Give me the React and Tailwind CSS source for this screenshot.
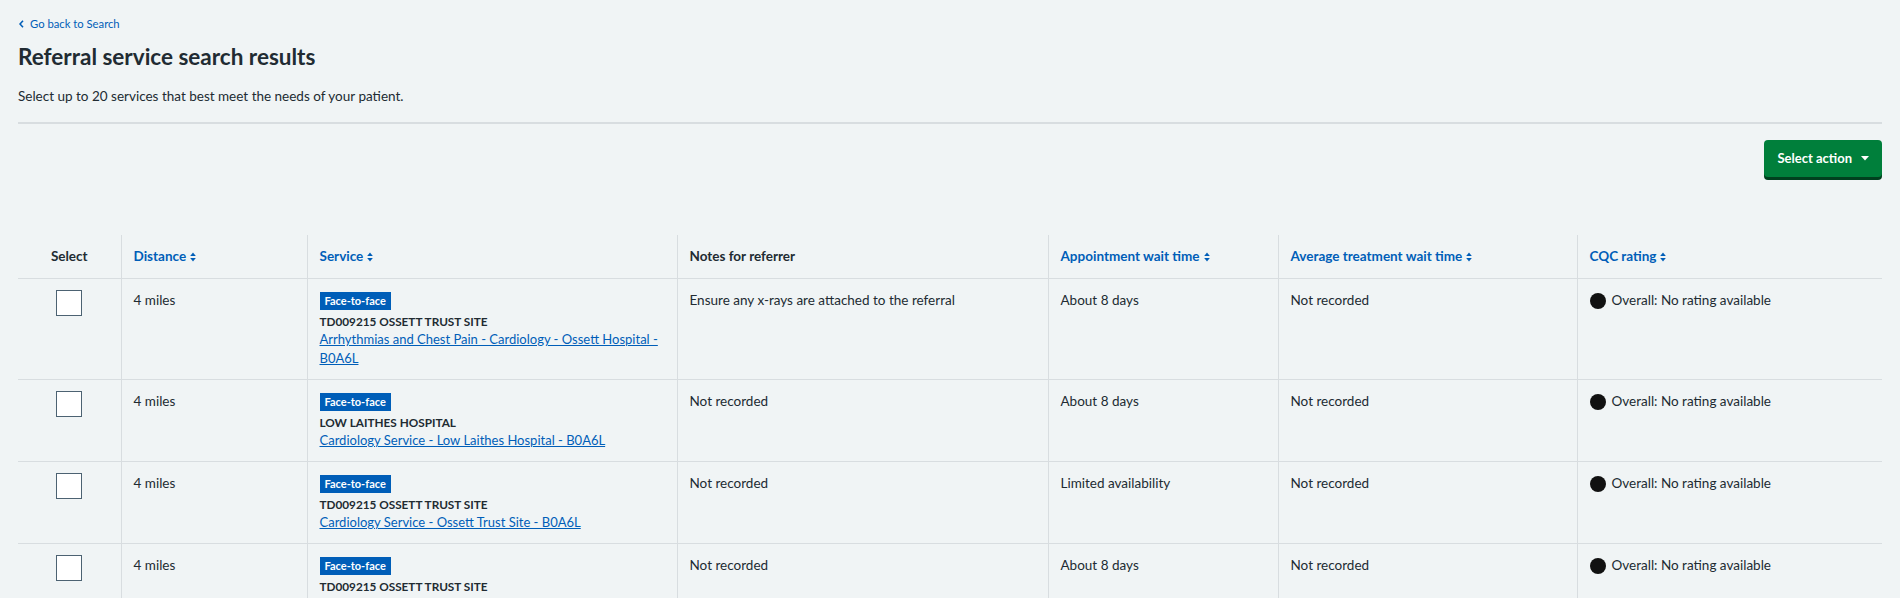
const rows = [
  {
    name: 'TD009215 OSSETT TRUST SITE',
    service: 'Arrhythmias and Chest Pain - Cardiology - Ossett Hospital - B0A6L',
    notes: 'Ensure any x-rays are attached to the referral',
    appointment: 'About 8 days',
  },
  {
    name: 'LOW LAITHES HOSPITAL',
    service: 'Cardiology Service - Low Laithes Hospital - B0A6L',
    notes: 'Not recorded',
    appointment: 'About 8 days',
  },
  {
    name: 'TD009215 OSSETT TRUST SITE',
    service: 'Cardiology Service - Ossett Trust Site - B0A6L',
    notes: 'Not recorded',
    appointment: 'Limited availability',
  },
  {
    name: 'TD009215 OSSETT TRUST SITE',
    service: 'Cardiology Service - Ossett Trust Site - B0A6L',
    notes: 'Not recorded',
    appointment: 'About 8 days',
  },
];

const SortIcon = () => (
  <svg width="6" height="10" viewBox="0 0 6 10" className="ml-[4px] inline-block">
    <path d="M3 0.5 L5.8 4 H0.2 Z" fill="#005eb8" />
    <path d="M3 9.5 L5.8 6 H0.2 Z" fill="#005eb8" />
  </svg>
);

const SortHeader = ({ label, className = '' }) => (
  <th className={`border-l border-[#d8dde0] px-3 py-[12px] text-left align-middle font-bold text-[#005eb8] ${className}`}>
    <span className="inline-flex items-center">
      {label}
      <SortIcon />
    </span>
  </th>
);

const App = () => {
  return (
    <div
      className="min-h-screen bg-[#f0f4f5] px-[18px] pt-[16px] text-[#212b32]"
      style={{ fontFamily: 'Lato, "Liberation Sans", Arial, sans-serif' }}
    >
      {/* Back link */}
      <a href="#" className="flex items-center gap-[6px] pl-[1px] text-[11.25px] leading-[16px] text-[#005eb8]">
        <svg width="5" height="8" viewBox="0 0 5 8">
          <path d="M4 0.8 L1 4 L4 7.2" fill="none" stroke="#005eb8" strokeWidth="1.6" />
        </svg>
        Go back to Search
      </a>

      <h1 className="mt-[10px] text-[22.5px] font-bold leading-[30px]">
        Referral service search results
      </h1>

      <p className="mt-[14px] text-[13.5px] leading-[20px]">
        Select up to 20 services that best meet the needs of your patient.
      </p>

      <hr className="mt-[16px] border-t-2 border-[#d8dde0]" />

      <div className="mt-[16px] flex justify-end">
        <button className="flex h-[37px] items-center gap-[9px] rounded-[4px] bg-[#007f3b] px-[13px] text-[13px] font-bold text-white shadow-[0_3px_0_#00401e]">
          Select action
          <svg width="8" height="5" viewBox="0 0 8 5">
            <path d="M0 0 H8 L4 4.5 Z" fill="white" />
          </svg>
        </button>
      </div>

      {/* Results table */}
      <table className="mt-[58px] w-full table-fixed border-collapse text-[13.5px] leading-[19px]">
        <thead>
          <tr className="border-b border-[#d8dde0]">
            <th className="w-[103px] py-[12px] text-center align-middle font-bold">Select</th>
            <SortHeader label="Distance" className="w-[186px]" />
            <SortHeader label="Service" className="w-[370px]" />
            <th className="w-[371px] border-l border-[#d8dde0] px-3 py-[12px] text-left align-middle font-bold">
              Notes for referrer
            </th>
            <SortHeader label="Appointment wait time" className="w-[230px]" />
            <SortHeader label="Average treatment wait time" className="w-[299px]" />
            <SortHeader label="CQC rating" />
          </tr>
        </thead>
        <tbody>
          {rows.map((row, i) => (
            <tr key={i} className="border-b border-[#d8dde0]">
              <td className="pt-[11px] pb-[11px] align-top">
                <div className="mx-auto h-[26px] w-[26px] border border-[#4c6272] bg-white" />
              </td>
              <td className="border-l border-[#d8dde0] px-3 pt-[12px] pb-[11px] align-top">4 miles</td>
              <td className="border-l border-[#d8dde0] px-3 pt-[12px] pb-[11px] align-top">
                <span className="inline-block h-[18px] bg-[#005eb8] px-[5px] text-[11px] font-bold leading-[18px] text-white">
                  Face-to-face
                </span>
                <div className="mt-[4px] text-[11.75px] font-bold uppercase leading-[16px]">{row.name}</div>
                <a href="#" className="text-[13px] text-[#005eb8] underline">
                  {row.service}
                </a>
              </td>
              <td className="border-l border-[#d8dde0] px-3 pt-[12px] pb-[11px] align-top">{row.notes}</td>
              <td className="border-l border-[#d8dde0] px-3 pt-[12px] pb-[11px] align-top">{row.appointment}</td>
              <td className="border-l border-[#d8dde0] px-3 pt-[12px] pb-[11px] align-top">Not recorded</td>
              <td className="border-l border-[#d8dde0] px-3 pt-[12px] pb-[11px] align-top">
                <span className="flex items-center gap-[6px]">
                  <span className="h-[16px] w-[16px] rounded-full bg-[#111111]" />
                  Overall: No rating available
                </span>
              </td>
            </tr>
          ))}
        </tbody>
      </table>
    </div>
  );
};

export default App;
